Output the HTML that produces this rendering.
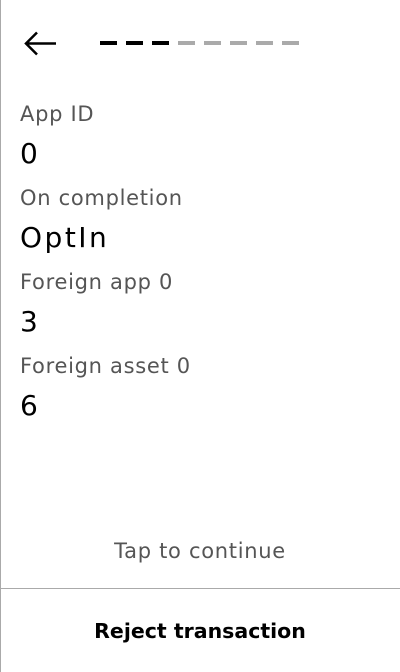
<!DOCTYPE html>
<html><head><style>
body{margin:0;width:400px;height:672px;background:#fff;font-family:"DejaVu Sans",sans-serif;position:relative;overflow:hidden}
.lb{position:absolute;left:0;top:0;width:1px;height:672px;background:#aaa}
.d{position:absolute;top:41px;height:4px;width:17px}
.t{position:absolute;left:20px;line-height:1;white-space:nowrap}
.l{font-size:21px;color:#555;letter-spacing:0.7px}
.v{font-size:28px;color:#000;letter-spacing:2.5px}
</style></head><body>
<div class="lb"></div>
<svg style="position:absolute;left:22px;top:29px" width="38" height="30"><path d="M34 14.5H4M15 3.5L4 14.5L15 25.5" stroke="#000" stroke-width="2.5" fill="none"/></svg>
<div class="d" style="left:100px;background:#000"></div>
<div class="d" style="left:126px;background:#000"></div>
<div class="d" style="left:152px;background:#000"></div>
<div class="d" style="left:178px;background:#aaa"></div>
<div class="d" style="left:204px;background:#aaa"></div>
<div class="d" style="left:230px;background:#aaa"></div>
<div class="d" style="left:256px;background:#aaa"></div>
<div class="d" style="left:282px;background:#aaa"></div>
<div class="t l" style="top:104px">App ID</div>
<div class="t v" style="top:140px">0</div>
<div class="t l" style="top:188px">On completion</div>
<div class="t v" style="top:224px">OptIn</div>
<div class="t l" style="top:272px">Foreign app 0</div>
<div class="t v" style="top:308px">3</div>
<div class="t l" style="top:356px">Foreign asset 0</div>
<div class="t v" style="top:392px">6</div>
<div style="position:absolute;left:0;width:400px;top:539px;text-align:center;font-size:21px;color:#555;letter-spacing:0.7px">Tap to continue</div>
<div style="position:absolute;left:0;top:588px;width:400px;height:1px;background:#aaa"></div>
<div style="position:absolute;left:0;width:400px;top:619px;text-align:center;font-size:20.5px;font-weight:bold;color:#000">Reject transaction</div>
</body></html>
